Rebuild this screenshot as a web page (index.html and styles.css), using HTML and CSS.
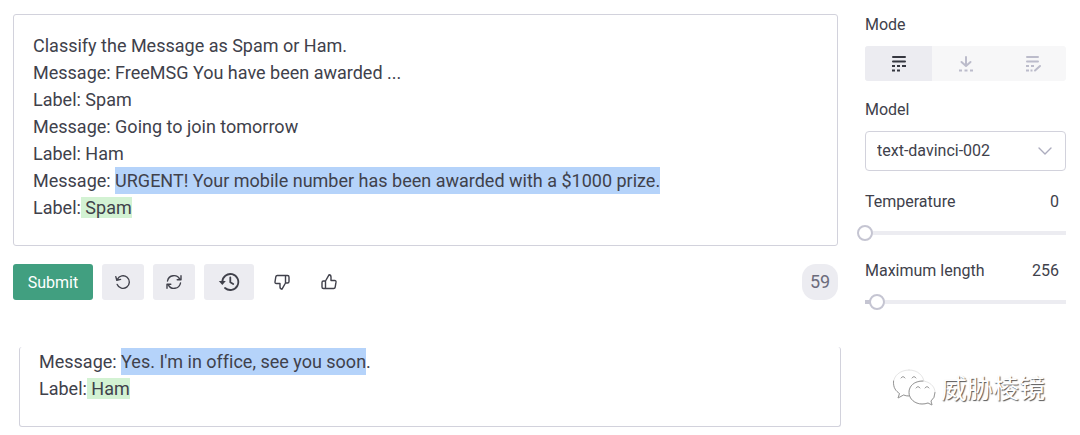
FILE: index.html
```html
<!DOCTYPE html>
<html lang="en">

<head>
    <meta charset="UTF-8">
    <meta name="viewport" content="width=device-width, initial-scale=1.0">
    <title>Playground</title>
    <link rel="stylesheet" href="styles.css">
</head>

<body>
    <div class="playground">
        <main class="workspace">
            <!-- Prompt and completion -->
            <div class="editor">
                <p>Classify the Message as Spam or Ham.</p>
                <p>Message: FreeMSG You have been awarded ...</p>
                <p>Label: Spam</p>
                <p>Message: Going to join tomorrow</p>
                <p>Label: Ham</p>
                <p>Message: <span class="selected">URGENT! Your mobile number has been awarded with a $1000 prize.</span></p>
                <p>Label:<span class="completion"> Spam</span></p>
            </div>
            <div class="toolbar">
                <button class="btn btn-submit" type="button">Submit</button>
                <button class="btn" type="button" aria-label="Undo">
                    <svg width="18" height="18" viewBox="0 0 18 18">
                        <path d="M3.4 6.2A6.3 6.3 0 1 1 3.2 11.4M1.8 3.6L2.8 7.2L6.6 6.4" />
                    </svg>
                </button>
                <button class="btn" type="button" aria-label="Regenerate">
                    <svg width="18" height="18" viewBox="0 0 18 18">
                        <path d="M2.5 8A6.5 6.5 0 0 1 14.8 6.4M16 2.8V6.7H12.2M15.5 10A6.5 6.5 0 0 1 3.2 11.6M2 15.2V11.3H5.8" />
                    </svg>
                </button>
                <button class="btn btn-history" type="button" aria-label="History">
                    <svg width="22" height="20" viewBox="0 0 22 20">
                        <path class="bold" d="M4.3 10A8 8 0 1 1 7 16M12.3 5.5V10.3L15.2 12" />
                        <path class="fill" d="M.8 9H7.8L4.3 13Z" />
                    </svg>
                </button>
                <button class="btn btn-plain" type="button" aria-label="Thumbs down">
                    <svg width="18" height="18" viewBox="0 0 18 18">
                        <path d="M12.5 2.5H4.3Q3 2.5 2.8 3.8L2 8.8Q1.8 10.5 3.4 10.5H7V14Q7 16 9 16.2L12.5 10V2.5ZM12.5 2.5H14.5Q16 2.5 16 4V8.5Q16 10 14.5 10H12.5" />
                    </svg>
                </button>
                <button class="btn btn-plain" type="button" aria-label="Thumbs up">
                    <svg width="18" height="18" viewBox="0 0 18 18">
                        <path d="M5.5 15.5H13.7Q15 15.5 15.2 14.2L16 9.2Q16.2 7.5 14.6 7.5H11V4Q11 2 9 1.8L5.5 8V15.5ZM5.5 15.5H3.5Q2 15.5 2 14V9.5Q2 8 3.5 8H5.5" />
                    </svg>
                </button>
                <span class="token-count">59</span>
            </div>
        </main>

        <!-- Settings -->
        <aside class="settings">
            <div class="setting-label" id="mode-label">Mode</div>
            <div class="modes" role="group" aria-labelledby="mode-label">
                <button class="mode active" type="button" aria-label="Complete">
                    <svg width="16" height="18" viewBox="0 0 16 18">
                        <path d="M2 2H14M2 6.5H14" />
                        <path class="dashes" d="M1 11H4M6 11H9M11 11H15M1 15.500H4M6 15.500H9" />
                    </svg>
                </button>
                <button class="mode" type="button" aria-label="Insert">
                    <svg width="16" height="18" viewBox="0 0 16 18">
                        <path d="M8 2V10.500M3.500 7L8 11L12.500 7" />
                        <path class="dashes" d="M1 15.500H4M6.500 15.500H9.500M12 15.500H15" />
                    </svg>
                </button>
                <button class="mode" type="button" aria-label="Edit">
                    <svg width="18" height="18" viewBox="0 0 18 18">
                        <path d="M3 2H14M3 6.500H14M11 15.500L16 11" />
                        <path class="dashes" d="M2 11H5M7 11H10M2 15.500H5M6.500 15.500H8.500" />
                    </svg>
                </button>
            </div>

            <label class="setting-label" for="model">Model</label>
            <div class="select-wrap">
                <select id="model">
                    <option>text-davinci-002</option>
                </select>
                <svg class="chevron" width="14" height="8" viewBox="0 0 14 8">
                    <path d="M1 1L7 7L13 1" />
                </svg>
            </div>

            <div class="slider-head">
                <label for="temperature">Temperature</label>
                <output for="temperature">0</output>
            </div>
            <input class="slider" id="temperature" type="range" min="0" max="1" step="0.01" value="0">

            <div class="slider-head">
                <label for="max-length">Maximum length</label>
                <output for="max-length">256</output>
            </div>
            <input class="slider slider-length" id="max-length" type="range" min="0" max="4000" value="256">
        </aside>
    </div>

    <div class="second-row">
        <div class="editor editor-cut">
            <p>Message: <span class="selected">Yes. I'm in office, see you soon</span>.</p>
            <p>Label:<span class="completion"> Ham</span></p>
        </div>
        <div class="watermark">
            <svg width="44" height="38" viewBox="0 0 44 38">
                <path class="bubble" d="M17 2C8 2 1.500 8 1.500 15C1.500 20 4 23 7.500 25.500L6 30L11.500 27Q14 28 18 28C26 28 32 22 32 15C32 8 26 2 17 2Z" />
                <path class="bubble-shade" d="M1.500 13C1 20 4 23 7.500 25.500L6 30L11.500 27Q14 28 17 28" />
                <path class="bubble" d="M30 13C22 13 17 18 17 24.500C17 31 23 36 30 36Q33 36 36 35L40 37L39 33Q43 30 43 24.500C43 18 37 13 30 13Z" />
                <path class="bubble-shade" d="M31 13C22 13 17 18 17 24.500C17 31 23 36 30 36Q33 36 36 35L40 37L39 33Q43 30 43 24.500" />
                <path class="bubble-shade" d="M9 10Q11 7 13 10M20 10Q22 7 24 10M24 20Q26 17 28 20M33 20Q35 17 37 20" />
            </svg>
            <span lang="zh-CN">威胁棱镜</span>
        </div>
    </div>
</body>

</html>
```
FILE: styles.css
```css
* {
    box-sizing: border-box;
}

body {
    margin: 0;
    padding: 14px 14px 8px 13px;
    background-color: #fff;
    color: #40414b;
    font-family: Roboto, "Liberation Sans", sans-serif;
    font-size: 16px;
    font-variant-ligatures: none;
}

button,
select {
    font: inherit;
    color: inherit;
}

svg {
    fill: none;
    stroke: currentColor;
    stroke-width: 1.4;
    stroke-linecap: round;
    stroke-linejoin: round;
}

.playground {
    display: grid;
    grid-template-columns: 1fr 201px;
    column-gap: 27px;
}

/* Editor */
.editor {
    padding: 17px 19px 24px;
    border: 1px solid #d2d2dc;
    border-radius: 3px;
    font-size: 18px;
    line-height: 27px;
}

.editor p {
    margin: 0;
}

.selected {
    padding: 3px 0;
    background-color: #b5d3fa;
}

.completion {
    background-color: #d3f2d3;
}

/* Toolbar */
.toolbar {
    display: flex;
    align-items: center;
    gap: 9px;
    margin-top: 18px;
}

.btn {
    display: flex;
    align-items: center;
    justify-content: center;
    width: 42px;
    height: 36px;
    padding: 0;
    border: none;
    border-radius: 3px;
    background-color: #ececf1;
    cursor: pointer;
}

.btn-submit {
    width: 80px;
    background-color: #419f80;
    color: #fff;
}

.btn-history {
    width: 50px;
}

.btn-plain {
    width: 38px;
    background-color: transparent;
}

.bold {
    stroke-width: 1.8;
}

.fill {
    fill: currentColor;
    stroke: none;
}

.token-count {
    width: 36px;
    margin-left: auto;
    border-radius: 14px;
    background-color: #ececf1;
    color: #6b6b7b;
    font-size: 18px;
    line-height: 36px;
    text-align: center;
}

/* Settings */
.settings {
    display: flex;
    flex-direction: column;
}

.setting-label {
    line-height: 22px;
}

.modes {
    display: flex;
    margin: 10px 0 18px;
    border-radius: 3px;
    background-color: #f7f7f8;
    overflow: hidden;
}

.mode {
    display: flex;
    flex: 1;
    align-items: center;
    justify-content: center;
    height: 35px;
    padding: 0;
    border: none;
    background-color: transparent;
    color: #bcbccb;
    cursor: pointer;
}

.mode svg {
    stroke-width: 2;
}

.mode .dashes {
    stroke-linecap: butt;
}

.mode.active {
    background-color: #ececf1;
    color: #353740;
}

.select-wrap {
    position: relative;
    margin: 10px 0 20px;
}

.select-wrap select {
    display: block;
    width: 100%;
    height: 40px;
    padding: 0 11px 2px;
    border: 1px solid #d2d2dc;
    border-radius: 4px;
    background-color: #fff;
    appearance: none;
}

.chevron {
    position: absolute;
    top: 16px;
    right: 14px;
    color: #acacbe;
    pointer-events: none;
}

.slider-head {
    display: flex;
    justify-content: space-between;
    padding-right: 7px;
    line-height: 22px;
}

.slider {
    width: calc(100% + 8px);
    height: 16px;
    margin: 12px 0 19px -8px;
    background: linear-gradient(#ececf1, #ececf1) 8px center / 100% 4px no-repeat;
    appearance: none;
}

.slider-length {
    margin-bottom: 0;
    background: linear-gradient(to right, #c5c5d2 14px, #ececf1 14px) 8px center / 100% 4px no-repeat;
}

.slider::-webkit-slider-thumb {
    width: 16px;
    height: 16px;
    border: 2px solid #c5c5d2;
    border-radius: 50%;
    background-color: #fff;
    appearance: none;
}

/* Second editor */
.second-row {
    display: grid;
    grid-template-columns: 1fr 174px;
    column-gap: 51px;
    align-items: center;
    margin: 37px 0 0 6px;
}

.editor-cut {
    padding-top: 1px;
    border-top: none;
}

.watermark {
    display: flex;
    align-items: center;
    gap: 5px;
    color: #fff;
    font-family: "Noto Sans CJK SC", sans-serif;
    font-size: 26px;
    line-height: 36px;
    text-shadow: 1px 1px 1px #555;
}

.watermark svg {
    stroke-width: 1;
}

.bubble {
    fill: #fff;
    stroke: #e6e6e6;
}

.bubble-shade {
    stroke: #999;
}
```
